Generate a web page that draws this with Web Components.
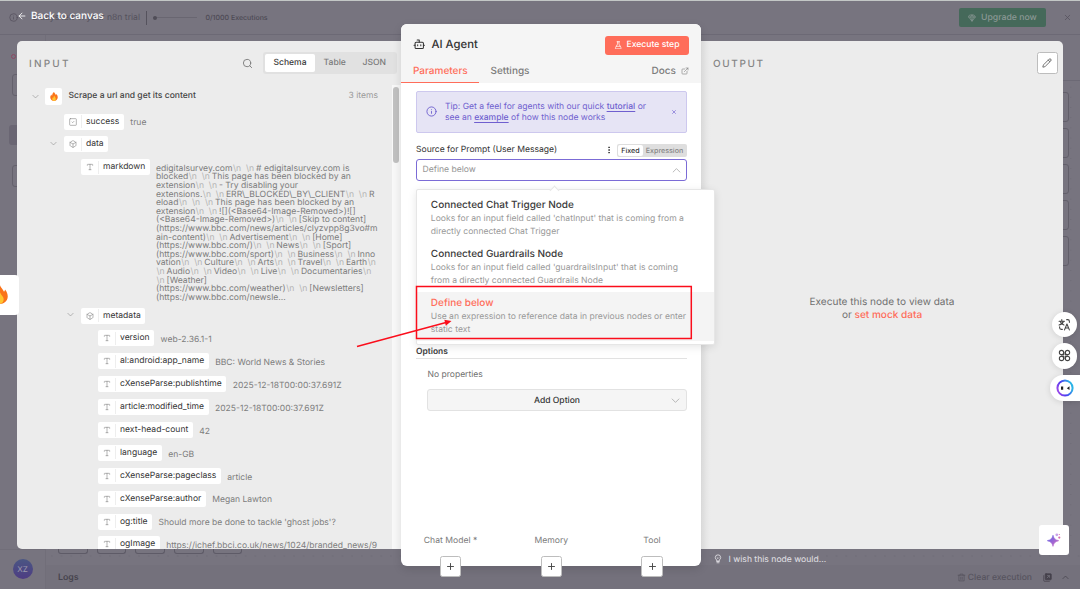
<!DOCTYPE html>
<html lang="en">
<head>
<meta charset="utf-8">
<title>AI Agent - n8n</title>
<style>
  html, body {
    margin: 0;
    width: 1080px;
    height: 589px;
    overflow: hidden;
  }

  body {
    font-family: Inter, "Liberation Sans", sans-serif;
    font-size: 8.600px;
    color: #444;
    background: #77747f;
    text-rendering: geometricPrecision;
    position: relative;
  }
</style>
</head>
<body>
<editor-backdrop></editor-backdrop>
<node-modal></node-modal>
<side-tools></side-tools>
<red-marker></red-marker>

<script>
const ICONS = {
  arrowLeft: '<path d="m12 19-7-7 7-7M19 12H5"/>',
  info: '<circle cx="12" cy="12" r="10"/><path d="M12 16v-4M12 8h.01"/>',
  search: '<circle cx="11" cy="11" r="8"/><path d="m21 21-4.3-4.3"/>',
  down: '<path d="m3 8 9 9 9-9"/>',
  up: '<path d="m3 16 9-9 9 9"/>',
  close: '<path d="M18 6 6 18M6 6l12 12"/>',
  plus: '<path d="M4 12h16M12 4v16"/>',
  bot: '<path d="M12 8V4H8"/><rect width="16" height="12" x="4" y="8" rx="2"/><path d="M2 14h2M20 14h2M15 13v2M9 13v2"/>',
  flask: '<path d="M14 2v6a2 2 0 0 0 .245.96l5.51 10.08A2 2 0 0 1 18 22H6a2 2 0 0 1-1.755-2.96l5.51-10.08A2 2 0 0 0 10 8V2M6.453 15h11.094M8.5 2h7"/>',
  external: '<path d="M15 3h6v6M10 14 21 3M18 13v6a2 2 0 0 1-2 2H5a2 2 0 0 1-2-2V8a2 2 0 0 1 2-2h6"/>',
  box: '<path d="M21 8a2 2 0 0 0-1-1.73l-7-4a2 2 0 0 0-2 0l-7 4A2 2 0 0 0 3 8v8a2 2 0 0 0 1 1.73l7 4a2 2 0 0 0 2 0l7-4A2 2 0 0 0 21 16ZM3.3 7l8.7 5 8.7-5M12 22V12"/>',
  check: '<rect width="20" height="20" x="2" y="2" rx="2"/><path d="m9 12 2 2 4-4"/>',
  type: '<path d="M12 4v16M4 7V5a1 1 0 0 1 1-1h14a1 1 0 0 1 1 1v2M9 20h6"/>',
  gem: '<path d="M6 3h12l4 6-10 13L2 9ZM11 3 8 9l4 13 4-13-3-6M2 9h20"/>',
  pencil: '<path d="M21.2 6.8a1 1 0 0 0-4-4L3.8 16.2a2 2 0 0 0-.5.8l-1.3 4.4a.5.5 0 0 0 .6.6l4.4-1.3a2 2 0 0 0 .8-.5ZM15 5l4 4"/>',
  dots: '<g fill="currentColor"><circle cx="12" cy="4" r="1.4"/><circle cx="12" cy="12" r="1.4"/><circle cx="12" cy="20" r="1.4"/></g>',
  bulb: '<path d="M9 17v-2.500C7 13 5.500 11 5.500 8.500a6.500 6.500 0 0 1 13 0C18.500 11 17 13 15 14.500V17ZM9 17h6M9.500 21h5M10 9l2 2 2-2"/>',
  trash: '<path d="M3 6h18M19 6v15H5V6M8 6V3h8v3M10 11v6M14 11v6"/>',
  popout: '<rect x="6" y="2" width="16" height="16" rx="2" fill="currentColor"/><path d="M2 7v13a2 2 0 0 0 2 2h13"/><path stroke="#77747f" d="M11 13l6-6M12 7h5v5"/>',
  translate: '<path d="M2 6h10M7 3v3M10 6c-1 4-4 6-8 7M4 6c1 4 4 6 7 7M16 3h2a3 3 0 0 1 3 3v2M3 16v2a3 3 0 0 0 3 3h2M12 22l4.500-11L21 22M13.500 18.500h6"/>',
  clover: '<circle cx="6.500" cy="6.500" r="4"/><circle cx="17.500" cy="6.500" r="4"/><circle cx="6.500" cy="17.500" r="4"/><circle cx="17.500" cy="17.500" r="4"/><path d="M10.500 6v4.500H6M13.500 6v4.500H18M10.500 18v-4.500H6M13.500 18v-4.500H18"/>'
};

const FLAME = `
  <svg viewBox="0 0 24 28">
    <path fill="#fa7319" d="M12 0c1 4 5 6 6 10 1-1 1.500-2 1.500-3.500C22.500 10 24 14 23.500 18c-.6 6-5.500 10-11.500 10S1 24 .5 18C.2 14 1.500 11 4 8c.2 2 .8 3.500 2 4.500C6 8 8 3 12 0Z"/>
    <path fill="#ffc42e" d="M12.500 11c.5 4 5 5.500 5 10.500 0 4-2.500 6.200-5.500 6.200S6.500 25.500 6.500 22c0-2.500 1-4 2.500-5.500.2 1.200.7 1.800 1.500 2.300C10.300 16 11 13 12.500 11Z"/>
  </svg>`;

class BaseElement extends HTMLElement {
  constructor() {
    super();
    this.attachShadow({ mode: "open" });
  }

  connectedCallback() {
    this.shadowRoot.innerHTML = `<style>${this.styles()}</style>${this.markup()}`;
  }
}

class UiIcon extends BaseElement {
  styles() {
    const size = this.getAttribute("size") || 10;
    return `
      :host { display: inline-flex; flex: none; width: ${size}px; height: ${size}px; }
      svg { width: 100%; height: 100%; fill: none; stroke: currentColor; stroke-linecap: round; stroke-linejoin: round; }
    `;
  }

  markup() {
    return `<svg viewBox="0 0 24 24" stroke-width="${this.getAttribute("weight") || 2}">${ICONS[this.getAttribute("name")]}</svg>`;
  }
}
customElements.define("ui-icon", UiIcon);

// Dimmed workflow editor behind the modal
class EditorBackdrop extends BaseElement {
  styles() {
    return `
      :host {
        display: grid;
        grid-template: 34px 514px 1fr / 46px 1fr;
        width: 1080px;
        height: 589px;
        box-sizing: border-box;
        border-top: 1px solid #c3c7c6;
        background: #77747f;
        color: #55525d;
        font-size: 8px;
      }
      header {
        grid-column: 1 / 3;
        display: flex;
        align-items: center;
        box-sizing: border-box;
        border-bottom: 1px solid #6c6975;
        padding: 0 8px 0 9px;
      }
      .trial { margin-left: 4px; width: 118px; white-space: nowrap; font-size: 8.600px; text-align: right; }
      .rule { width: 1px; height: 14px; background: #55525d; margin: 0 6px 0 5.500px; }
      .meter { width: 44px; height: 1.500px; background: #696671; display: flex; align-items: center; margin-right: 9px; }
      .meter::before { content: ""; width: 4px; height: 4px; border-radius: 50%; background: #504d58; }
      .count { font-size: 7px; font-weight: 500; color: #4c4954; }
      .upgrade {
        margin-left: auto; margin-right: 17px;
        display: flex; align-items: center; gap: 5px;
        box-sizing: border-box; width: 87px; height: 19px; padding-left: 9px;
        border-radius: 2px; background: #45695a; color: #8b9895;
        font-size: 8.700px; font-weight: 500; white-space: nowrap;
      }
      .rail {
        border-right: 1px solid #716e79;
        display: flex; flex-direction: column; align-items: flex-end;
        box-sizing: border-box;
      }
      .dot { width: 3px; height: 3px; border: 1px solid #8c4a63; border-radius: 50%; margin: 19px 29px 15px 0; }
      .tile { box-sizing: border-box; width: 33px; height: 22px; border: 1px solid #64616c; border-radius: 3px; margin-bottom: 29px; }
      .tile.on { width: 36px; border: 0; background: #6a6673; height: 20px; margin-bottom: 20px; }
      .canvas {
        display: grid;
        grid-template: 46px 1fr / 1fr;
      }
      .toolbar { border-bottom: 1px solid #6c6975; }
      .grid {
        background: radial-gradient(circle, #6c6974 .6px, transparent .9px) 1px 1px / 10.200px 10.200px;
        display: flex; flex-direction: column; align-items: flex-end;
        gap: 6px; padding: 11px 11px 0 0;
      }
      .node { box-sizing: border-box; width: 40px; height: 30px; border: 1px solid #625f6a; border-radius: 3px; flex: none; }
      .user { display: flex; align-items: flex-start; justify-content: center; border-right: 1px solid #716e79; border-top: 1px solid #716e79; padding-top: 8.500px; }
      .avatar {
        width: 20px; height: 20px; border-radius: 50%; line-height: 20px; text-align: center;
        font-size: 8px; color: #9c99ad; background: linear-gradient(#4a5683, #4e3c83);
      }
      .foot { display: grid; grid-template-rows: 16px 1fr; overflow: hidden; }
      .strip { display: flex; gap: 9px; padding-left: 12px; background: radial-gradient(circle, #706d78 .6px, transparent .8px) 1px 2px / 9.700px 10px; }
      .strip div { box-sizing: border-box; width: 29.700px; height: 5px; border: 1px solid #5e5b67; border-top: 0; border-radius: 0 0 3px 3px; }
      .logs {
        display: flex; align-items: center; padding: 0 11px 0 12px; background: #74717c;
        font-size: 8.800px; font-weight: 600; color: #47444e;
      }
      .clear { margin-left: auto; display: flex; align-items: center; gap: 2px; color: #57545f; font-weight: 500; font-size: 8.600px; padding-top: 1px; }
      .clear ui-icon:nth-of-type(2) { margin: 0 8px 0 9px; color: #45424c; }
      .clear ui-icon:nth-of-type(3) { color: #45424c; }
    `;
  }

  markup() {
    return `
      <header>
        <ui-icon name="info" size="9"></ui-icon>
        <span class="trial">2 days left in your n8n trial</span>
        <span class="rule"></span>
        <span class="meter"></span>
        <span class="count">0/1000 Executions</span>
        <span class="upgrade"><ui-icon name="gem" size="8"></ui-icon>Upgrade now</span>
        <ui-icon name="close" size="9"></ui-icon>
      </header>
      <div class="rail">
        <div class="dot"></div>
        <div class="tile"></div>
        <div class="tile on"></div>
        <div class="tile"></div>
      </div>
      <div class="canvas">
        <div class="toolbar"></div>
        <div class="grid">${'<div class="node"></div>'.repeat(5)}</div>
      </div>
      <div class="user"><div class="avatar">XZ</div></div>
      <div class="foot">
        <div class="strip">${"<div></div>".repeat(5)}</div>
        <div class="logs">
          Logs
          <span class="clear">
            <ui-icon name="trash" size="9"></ui-icon>Clear execution
            <ui-icon name="popout" size="9"></ui-icon>
            <ui-icon name="up" size="7" weight="2.500"></ui-icon>
          </span>
        </div>
      </div>
    `;
  }
}
customElements.define("editor-backdrop", EditorBackdrop);

// One key / value pair of the schema tree
class SchemaRow extends BaseElement {
  styles() {
    return `
      :host { display: flex; align-items: flex-start; height: 22.900px; white-space: nowrap; }
      .chevron { width: 8px; flex: none; margin-right: 6px; padding-top: 3.500px; color: #8a8a8a; height: 8px; }
      .pill {
        display: flex; align-items: center; height: 16px; flex: none;
        border-radius: 2px; background: #fff; color: #333;
        font-size: 8.550px; padding-right: 4.500px;
      }
      .kind {
        display: flex; align-items: center; justify-content: center;
        width: 17px; height: 13px; border-right: 1px solid #eee; margin-right: 4px; color: #858585;
      }
      .value { margin-left: 6.500px; padding-top: 4.700px; line-height: 11px; font-size: 8.560px; color: #7d7d7d; }
    `;
  }

  markup() {
    const kind = this.getAttribute("kind") || "type";
    return `
      <div class="chevron">${this.hasAttribute("open") ? '<ui-icon name="down" size="7"></ui-icon>' : ""}</div>
      <div class="pill"><span class="kind"><ui-icon name="${kind}" size="8" weight="1.800"></ui-icon></span>${this.getAttribute("name")}</div>
      <div class="value"><slot></slot></div>
    `;
  }
}
customElements.define("schema-row", SchemaRow);

const MARKDOWN_LINES = String.raw`edigitalsurvey.com\n \n# edigitalsurvey.com is
blocked\n \nThis page has been blocked by an
extension\n \n- Try disabling your
extensions.\n \nERR\_BLOCKED\_BY\_CLIENT\n \nR
eload\n \n \nThis page has been blocked by an
extension\n \n![](<Base64-Image-Removed>)![]
(<Base64-Image-Removed>)\n \n[Skip to content]
(https://www.bbc.com/news/articles/clyzvpp8g3vo#m
ain-content)\n \nAdvertisement\n \n[Home]
(https://www.bbc.com/)\n \nNews\n \n[Sport]
(https://www.bbc.com/sport)\n \nBusiness\n \nInno
vation\n \nCulture\n \nArts\n \nTravel\n \nEarth\n
\nAudio\n \nVideo\n \nLive\n \nDocumentaries\n
\n[Weather]
(https://www.bbc.com/weather)\n \n[Newsletters]
(https://www.bbc.com/newsle...`.split("\n");

class MarkdownValue extends BaseElement {
  styles() {
    return `
      :host { display: block; font-size: 8.600px; line-height: 8.600px; color: #7d7d7d; white-space: nowrap; }
      i { font-style: normal; color: #b4b4b4; margin: 0 1.900px 0 .5px; }
    `;
  }

  markup() {
    return MARKDOWN_LINES.map((line) => {
      const text = line.replace(/</g, "&lt;").replace(/\\n/g, "<i>\\n</i>");
      return `<div>${text}</div>`;
    }).join("");
  }
}
customElements.define("markdown-value", MarkdownValue);

class InputPanel extends BaseElement {
  styles() {
    return `
      :host {
        display: flex; flex-direction: column; height: 508px; margin-top: 41px;
        background: #ececec; border-radius: 5px 0 0 5px; overflow: hidden;
      }
      header { display: flex; align-items: center; flex: none; height: 22px; padding: 11px 4px 0 12px; }
      h2 { margin: 1px 0 0; font-size: 10px; font-weight: 500; letter-spacing: 2.200px; color: #858585; }
      header > ui-icon { margin-left: auto; color: #7b7b7b; }
      .tabs {
        display: flex; box-sizing: border-box; height: 22px; width: 134px; padding: 2px; margin-left: 10px;
        background: #e1e1e1; border-radius: 3px; font-size: 8.550px; font-weight: 500; color: #7b7b7b;
      }
      .tabs span { width: 39.500px; line-height: 19px; height: 18px; text-align: center; }
      .tabs .active { width: 50px; background: #fff; color: #3c3c3c; border-radius: 2px; }
      .body { display: flex; flex: 1; min-height: 0; margin-top: 11px; }
      .tree { width: 375px; overflow: hidden; flex: none; }
      .bar { flex: 1; background: #f8f8f8; padding: 2px 2px 0 1px; }
      .bar div { width: 6px; height: 76px; border-radius: 3px; background: #c1c1c1; }
      .source { display: flex; align-items: center; height: 17px; margin: 2.500px 14px 9px 14.500px; color: #444; font-size: 8.550px; font-weight: 500; }
      .source > ui-icon { color: #8a8a8a; }
      .logo { display: flex; align-items: center; justify-content: center; width: 17px; height: 17px; margin: 0 6.500px 0 6.500px; border-radius: 2px; background: #fff; }
      .logo svg { width: 8px; height: 9px; }
      .source em { margin-left: auto; font-style: normal; font-weight: 400; color: #9a9a9a; }
      .l1 { margin-left: 33px; }
      .l2 { margin-left: 50px; }
      .l3 { margin-left: 67px; }
      .md { display: flex; height: 148.300px; }
      .md schema-row { width: 84px; flex: none; }
      .md markdown-value { margin: 5.500px 0 0 5px; }
    `;
  }

  markup() {
    return `
      <header>
        <h2>INPUT</h2>
        <ui-icon name="search" size="11"></ui-icon>
        <div class="tabs"><span class="active">Schema</span><span>Table</span><span>JSON</span></div>
      </header>
      <div class="body">
        <div class="tree">
          <div class="source">
            <ui-icon name="down" size="7"></ui-icon>
            <span class="logo">${FLAME}</span>
            Scrape a url and get its content
            <em>3 items</em>
          </div>
          <schema-row class="l1" kind="check" name="success">true</schema-row>
          <schema-row class="l1" kind="box" name="data" open></schema-row>
          <div class="l2 md"><schema-row name="markdown"></schema-row><markdown-value></markdown-value></div>
          <schema-row class="l2" kind="box" name="metadata" open></schema-row>
          <schema-row class="l3" name="version">web-2.36.1-1</schema-row>
          <schema-row class="l3" name="al:android:app_name">BBC: World News &amp; Stories</schema-row>
          <schema-row class="l3" name="cXenseParse:publishtime">2025-12-18T00:00:37.691Z</schema-row>
          <schema-row class="l3" name="article:modified_time">2025-12-18T00:00:37.691Z</schema-row>
          <schema-row class="l3" name="next-head-count">42</schema-row>
          <schema-row class="l3" name="language">en-GB</schema-row>
          <schema-row class="l3" name="cXenseParse:pageclass">article</schema-row>
          <schema-row class="l3" name="cXenseParse:author">Megan Lawton</schema-row>
          <schema-row class="l3" name="og:title">Should more be done to tackle 'ghost jobs'?</schema-row>
          <schema-row class="l3" name="ogImage">https://ichef.bbci.co.uk/news/1024/branded_news/9</schema-row>
        </div>
        <div class="bar"><div></div></div>
      </div>
    `;
  }
}
customElements.define("input-panel", InputPanel);

class SelectOption extends BaseElement {
  styles() {
    return `
      :host { display: block; height: 45px; padding: 4px 10px 0 13.800px; font-size: 8.580px; line-height: 12.800px; color: #999; white-space: nowrap; }
      :host([selected]) { background: #f4f4f4; --title: #ff6d5a; }
      b { display: block; font-weight: 500; font-size: 10px; line-height: 14px; color: var(--title, #3a3a3a); margin-bottom: 1.300px; }
    `;
  }

  markup() {
    return `<b>${this.getAttribute("label")}</b><slot></slot>`;
  }
}
customElements.define("select-option", SelectOption);

class AgentPanel extends BaseElement {
  styles() {
    return `
      :host {
        display: flex; flex-direction: column; height: 542px; margin-top: 24px;
        background: #fff; border-radius: 6px; position: relative; z-index: 1;
        box-shadow: 0 3px 10px rgba(0, 0, 0, .12);
      }
      header { height: 59px; flex: none; background: #f5f5f5; border-radius: 6px 6px 0 0; }
      .title { display: flex; align-items: center; height: 20px; padding: 10.500px 12px 0 12px; font-size: 11.300px; line-height: 14px; font-weight: 500; color: #333; }
      .title > ui-icon { margin-right: 6px; }
      .title > b { font-weight: 500; margin-bottom: 1px; }
      .run {
        display: flex; align-items: center; justify-content: center; gap: 4px; width: 84.500px; height: 19px; margin-left: auto;
        background: #ff6d5a; color: #fff; border-radius: 3px; font-size: 8.600px; position: relative; top: .5px;
      }
      .nav { display: flex; height: 28.500px; font-size: 10px; line-height: 33px; font-weight: 500; color: #7b7b7b; }
      .nav .active { box-sizing: border-box; width: 78px; padding-left: 12px; color: #ff6d5a; border-bottom: 1.500px solid #ff6d5a; }
      .nav .settings { margin-left: 11.500px; }
      .nav .docs { margin-left: auto; padding-right: 12px; display: flex; align-items: center; gap: 5px; height: 33px; }
      .nav .docs ui-icon { margin-bottom: 1px; }
      .form { padding: 8px 14px 0 15px; display: flex; flex-direction: column; }
      .tip {
        display: flex; align-items: center; box-sizing: border-box; height: 42px; padding: 0 9px 0 8.500px;
        background: #e6e4f5; border: 1px solid #cdc8ee; border-radius: 2px; color: #6f5fcf; font-size: 8.560px; line-height: 11.500px;
      }
      .tip p { margin: 0 auto 0 8.500px; padding-top: 2.500px; white-space: nowrap; }
      .tip ui-icon:first-child { margin-bottom: 1px; }
      .tip u { font-weight: 500; text-underline-offset: 1.500px; }
      .label { display: flex; align-items: center; height: 12px; margin: 11px 0 3px; color: #333; font-size: 8.580px; }
      .label ui-icon { margin: 0 4px 0 auto; color: #333; }
      .toggle { display: flex; box-sizing: border-box; width: 70px; height: 13px; padding: 1px; background: #dedede; border-radius: 2px; font-size: 7.100px; line-height: 11px; font-weight: 500; color: #858585; }
      .toggle span { text-align: center; flex: 1; }
      .toggle .on { flex: none; width: 25px; background: #fff; color: #333; border-radius: 2px; }
      .select {
        display: flex; align-items: center; justify-content: space-between; position: relative;
        box-sizing: border-box; height: 22px; padding: 0 5.500px; border: 1px solid #7b6bd6; border-radius: 3px;
        font-size: 8.600px; color: #959595;
      }
      .menu {
        position: absolute; top: 29px; left: -1px; box-sizing: border-box; width: 299px; height: 155.500px; padding-top: 4px;
        background: #fff; border: .5px solid #e6e6e6; border-radius: 2px; box-shadow: 0 2px 8px rgba(0, 0, 0, .1);
      }
      .menu::before {
        content: ""; position: absolute; top: -3.500px; left: 134px; width: 6px; height: 6px; transform: rotate(45deg);
        background: #fff; border: solid #e6e6e6; border-width: .5px 0 0 .5px;
      }
      h3 { margin: 163.500px 0 0; height: 13.500px; line-height: 14.500px; font-size: 8.450px; font-weight: 600; color: #3e3e3e; border-bottom: 1px solid #e2e2e2; }
      .empty { margin: 10px 0 0 11.500px; line-height: 12.500px; font-size: 8.550px; color: #707070; }
      .add {
        display: flex; align-items: center; box-sizing: border-box; height: 22px; margin: 7.500px 0 0 11px; padding: 0 6px;
        background: #f5f5f5; border: 1px solid #e2e2e2; border-radius: 3px; color: #333; font-size: 8.550px; font-weight: 500;
      }
      .add span { flex: 1; text-align: center; padding: 1px 0 0 9px; }
      .add ui-icon, .select > ui-icon { color: #999; }
      footer { display: flex; justify-content: space-between; margin: auto 14px -11px 14.500px; font-size: 8.600px; color: #7b7b7b; }
      .port { display: flex; flex-direction: column; align-items: center; width: 70px; gap: 9.500px; }
      .port i { display: flex; align-items: center; justify-content: center; box-sizing: border-box; width: 21.500px; height: 21.500px; background: #fff; border: 1px solid #bdbdbd; border-radius: 2.500px; color: #444; }
    `;
  }

  markup() {
    const ports = ["Chat Model *", "Memory", "Tool"];
    return `
      <header>
        <div class="title"><ui-icon name="bot" size="12.500"></ui-icon><b>AI Agent</b>
          <span class="run"><ui-icon name="flask" size="8.500"></ui-icon>Execute step</span>
        </div>
        <div class="nav">
          <span class="active">Parameters</span>
          <span class="settings">Settings</span>
          <span class="docs">Docs <ui-icon name="external" size="8" weight="1.800"></ui-icon></span>
        </div>
      </header>
      <div class="form">
        <div class="tip">
          <ui-icon name="info" size="11"></ui-icon>
          <p>Tip: Get a feel for agents with our quick <u>tutorial</u> or<br>see an <u>example</u> of how this node works</p>
          <ui-icon name="close" size="6" weight="2.500"></ui-icon>
        </div>
        <div class="label">Source for Prompt (User Message)
          <ui-icon name="dots" size="8"></ui-icon>
          <div class="toggle"><span class="on">Fixed</span><span>Expression</span></div>
        </div>
        <div class="select">Define below<ui-icon name="up" size="9" weight="1.800"></ui-icon>
          <div class="menu">
            <select-option label="Connected Chat Trigger Node">Looks for an input field called 'chatInput' that is coming from a<br>directly connected Chat Trigger</select-option>
            <select-option label="Connected Guardrails Node">Looks for an input field called 'guardrailsInput' that is coming<br>from a directly connected Guardrails Node</select-option>
            <select-option label="Define below" selected>Use an expression to reference data in previous nodes or enter<br>static text</select-option>
          </div>
        </div>
        <h3>Options</h3>
        <div class="empty">No properties</div>
        <div class="add"><span>Add Option</span><ui-icon name="down" size="9" weight="1.800"></ui-icon></div>
      </div>
      <footer>
        ${ports.map((port) => `<div class="port">${port}<i><ui-icon name="plus" size="9" weight="2.500"></ui-icon></i></div>`).join("")}
      </footer>
    `;
  }
}
customElements.define("agent-panel", AgentPanel);

class OutputPanel extends BaseElement {
  styles() {
    return `
      :host { display: flex; flex-direction: column; margin-top: 41px; }
      .panel { display: flex; flex-direction: column; height: 508px; flex: none; background: linear-gradient(90deg, #e6e6e6, #ececec 10px); border-radius: 0 5px 0 0; }
      header { display: flex; align-items: center; justify-content: space-between; height: 22px; padding: 11px 5px 0 12px; }
      h2 { margin: 1px 0 0; font-size: 10px; font-weight: 500; letter-spacing: 1.600px; color: #858585; }
      .edit { display: flex; align-items: center; justify-content: center; box-sizing: border-box; width: 21.500px; height: 21.500px; background: #fff; border: 1px solid #bdbdbd; border-radius: 2.500px; color: #444; }
      .hint { margin: 221.500px 0 0; text-align: center; font-size: 10.050px; line-height: 13.500px; color: #6f6f6f; }
      .hint span { color: #ff6d5a; font-weight: 500; }
      .wish { display: flex; align-items: center; gap: 6px; height: 21px; padding-left: 11.500px; color: #e2e1e6; font-size: 8.600px; }
      .wish ui-icon { margin-bottom: 1px; }
    `;
  }

  markup() {
    return `
      <div class="panel">
        <header><h2>OUTPUT</h2><div class="edit"><ui-icon name="pencil" size="10" weight="1.800"></ui-icon></div></header>
        <p class="hint">Execute this node to view data<br>or <span>set mock data</span></p>
      </div>
      <div class="wish"><ui-icon name="bulb" size="10"></ui-icon>I wish this node would...</div>
    `;
  }
}
customElements.define("output-panel", OutputPanel);

class NodeModal extends BaseElement {
  styles() {
    return `
      :host { position: absolute; inset: 0; display: grid; grid-template-columns: 384px 300px 362px; align-items: start; padding-left: 17px; }
      .back { position: absolute; top: 8px; left: 17px; display: flex; align-items: center; gap: 4px; height: 16px; color: #fff; font-size: 10.050px; font-weight: 500; }
    `;
  }

  markup() {
    return `
      <div class="back"><ui-icon name="arrowLeft" size="10"></ui-icon>Back to canvas</div>
      <input-panel></input-panel>
      <agent-panel></agent-panel>
      <output-panel></output-panel>
    `;
  }
}
customElements.define("node-modal", NodeModal);

// Floating buttons stuck to the window edges
class SideTools extends BaseElement {
  styles() {
    return `
      :host { position: absolute; inset: 0; }
      .tab { position: absolute; left: 0; top: 275px; width: 19px; height: 39.500px; background: #fff; border-radius: 0 4px 4px 0; overflow: hidden; display: flex; align-items: center; }
      .tab svg { width: 16px; height: 19px; margin-left: -8px; flex: none; }
      .stack { position: absolute; right: 0; top: 311.500px; display: flex; flex-direction: column; align-items: flex-end; gap: 6px; }
      .round { display: flex; align-items: center; justify-content: center; width: 25.500px; height: 25.500px; margin-right: 3px; background: #fff; border-radius: 50%; color: #444; box-shadow: 0 1px 6px rgba(0, 0, 0, .12); }
      .wide { display: flex; align-items: center; width: 24px; height: 26px; padding-left: 6px; background: #fff; border-radius: 13px 0 0 13px; box-shadow: 0 1px 6px rgba(0, 0, 0, .12); }
      .wide svg { width: 18px; height: 18px; }
      .spark { position: absolute; left: 1038.500px; top: 525px; width: 30px; height: 30px; display: flex; align-items: center; justify-content: center; background: #fff; border-radius: 3px; }
      .spark svg { width: 14px; height: 14px; }
    `;
  }

  markup() {
    return `
      <div class="tab">${FLAME}</div>
      <div class="stack">
        <div class="round"><ui-icon name="translate" size="13"></ui-icon></div>
        <div class="round"><ui-icon name="clover" size="13"></ui-icon></div>
        <div class="wide">
          <svg viewBox="0 0 18 18">
            <defs><linearGradient id="ring" x1="0" y1="1" x2="1" y2=".6"><stop stop-color="#b14be8"/><stop offset=".5" stop-color="#4a3df0"/><stop offset="1" stop-color="#2bb3e6"/></linearGradient></defs>
            <circle cx="9" cy="9" r="7.600" fill="none" stroke="url(#ring)" stroke-width="2"/>
            <path fill="#222" d="M5 7.500h2.200v3.200H5zM13.500 7.300v3.800L10.800 9.200z"/>
          </svg>
        </div>
      </div>
      <div class="spark">
        <svg viewBox="0 0 14 14">
          <defs><linearGradient id="star" x1="0" y1="0" x2="1" y2="1"><stop stop-color="#5b60e8"/><stop offset="1" stop-color="#d76bc0"/></linearGradient></defs>
          <path fill="url(#star)" d="M6 2.200c.9 3.300 2 4.500 5.700 5.500C8 8.700 6.900 9.900 6 13.400 5.100 9.900 4 8.700.3 7.700 4 6.700 5.100 5.500 6 2.200Z" stroke="url(#star)" stroke-width=".6" stroke-linejoin="round"/>
          <circle cx="9.800" cy="1.800" r="1.400" fill="#c9a2ea"/><circle cx="12.300" cy="4.600" r="1.100" fill="#d86cae"/><circle cx="12.300" cy="1.500" r=".6" fill="#d86cae"/>
        </svg>
      </div>
    `;
  }
}
customElements.define("side-tools", SideTools);

class RedMarker extends BaseElement {
  styles() {
    return `
      :host { position: absolute; inset: 0; z-index: 2; pointer-events: none; }
      svg { display: block; }
    `;
  }

  markup() {
    return `
      <svg width="1080" height="589" fill="none" stroke="#fb0d1b">
        <rect x="416.500" y="286.500" width="274.800" height="52" stroke-width="1.500"/>
        <path d="M357 346.500 446 322.500" stroke-width="1.400"/>
        <path d="M451.500 321 444.300 319.800 445.800 325.800Z" fill="#fb0d1b" stroke="none"/>
      </svg>
    `;
  }
}
customElements.define("red-marker", RedMarker);
</script>
</body>
</html>
